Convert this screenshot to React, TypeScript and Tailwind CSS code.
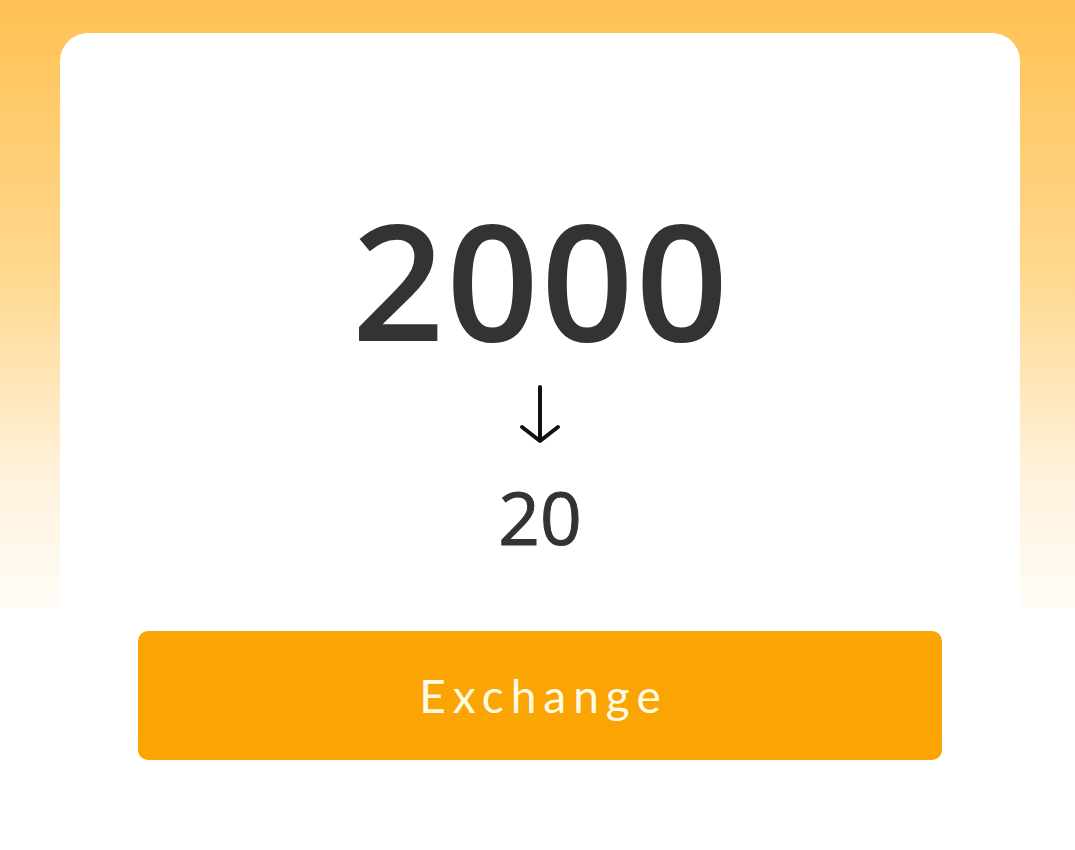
import React from "react";

export default function App() {
  return (
    <div className="w-full h-[850px] bg-white flex flex-col overflow-hidden">
      <div className="h-[608px] shrink-0 bg-[linear-gradient(180deg,#ffc153_0%,#ffd88f_45%,#fff3df_80%,#fffcf7_100%)] pt-[33px] pl-[60px]">
        <div className="w-[960px] h-full bg-white rounded-t-[28px] flex flex-col items-center pt-[185px]">
          <div
            className="text-[162px] leading-[120px] font-semibold text-[#333333] tracking-[2px] pl-[2px]"
            style={{ fontFamily: '"Open Sans", "Noto Sans", sans-serif' }}
          >
            2000
          </div>
          <svg className="mt-[47px]" width="44" height="62" viewBox="0 0 44 62" fill="none">
            <path d="M22 2 V55" stroke="#111" strokeWidth="4" strokeLinecap="round" />
            <path d="M4 42 L22 56 L40 42" stroke="#111" strokeWidth="4" strokeLinecap="round" strokeLinejoin="round" />
          </svg>
          <div
            className="mt-[40px] text-[73px] leading-[60px] font-normal text-[#333333] [-webkit-text-stroke:1px_#333333]"
            style={{ fontFamily: '"Open Sans", "Noto Sans", sans-serif' }}
          >
            20
          </div>
        </div>
      </div>
      <div className="pl-[138px] pt-[23px]">
        <button className="w-[804px] h-[129px] rounded-[10px] bg-[#fba504] flex items-center justify-center">
          <span
            className="text-[46px] font-normal text-[#fffbe6] tracking-[7px] pl-[7px]"
            style={{ fontFamily: 'Lato, "Noto Sans", sans-serif' }}
          >
            Exchange
          </span>
        </button>
      </div>
    </div>
  );
}
